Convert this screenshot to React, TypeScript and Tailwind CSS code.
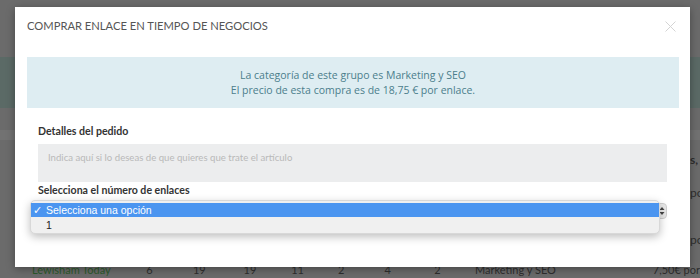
import React from 'react';

// Fondo de la página (tabla detrás del modal, oscurecida por el overlay)
function BackgroundPage() {
  return (
    <div className="flex flex-col w-[700px] h-[278px] bg-[#6b6b6b] text-[#2e2e2e] font-['Lato',sans-serif]">
      <div className="h-[57px]" />
      <div className="h-[51px] bg-[#5b6a66]" />
      <div className="h-[22px]" />
      <div className="h-[10px] bg-[#727272]" />
      <div className="h-[30px] pl-[690px] text-[12px] leading-[40px] whitespace-nowrap overflow-hidden font-bold">s,</div>
      <div className="h-[32px] pl-[690px] text-[12px] leading-[46px] whitespace-nowrap overflow-hidden">por</div>
      <div className="h-[47px] pl-[690px] text-[12px] leading-[76px] whitespace-nowrap overflow-hidden">por</div>
      <div className="flex items-start h-[29px] pt-[14px] text-[11px] leading-[14px] whitespace-nowrap">
        <span className="ml-[32px] w-[115px] text-[#2c5a2c]">Lewisham Today</span>
        <span className="w-[47px]">6</span>
        <span className="w-[51px]">19</span>
        <span className="w-[48px]">19</span>
        <span className="w-[47px]">11</span>
        <span className="w-[47px]">2</span>
        <span className="w-[50px]">4</span>
        <span className="w-[41px]">2</span>
        <span className="w-[179px]">Marketing y SEO</span>
        <span>7,50€ por</span>
      </div>
    </div>
  );
}

function CloseIcon() {
  return (
    <svg width="11" height="11" viewBox="0 0 11 11" className="block">
      <path d="M0.5 0.5 L10.5 10.5 M10.5 0.5 L0.5 10.5" stroke="#d4d4d4" strokeWidth="1" />
    </svg>
  );
}

function SelectArrows() {
  return (
    <svg width="6" height="10" viewBox="0 0 6 10" className="block">
      <path d="M0.5 4 L3 1 L5.5 4 Z" fill="#444" />
      <path d="M0.5 6 L3 9 L5.5 6 Z" fill="#444" />
    </svg>
  );
}

function BuyLinkModal() {
  return (
    <div className="absolute left-[15px] top-[7px] w-[675px] h-[260px] bg-white shadow-[0_2px_8px_rgba(0,0,0,0.35)]">
      {/* cabecera */}
      <div className="flex justify-between items-start pt-[11px] pl-[12px] pr-[14px] h-[50px]">
        <h3 className="text-[11.2px] leading-[16px] text-[#555] font-['Lato',sans-serif]">
          COMPRAR ENLACE EN TIEMPO DE NEGOCIOS
        </h3>
        <div className="mt-[3px]">
          <CloseIcon />
        </div>
      </div>

      {/* aviso */}
      <div className="mx-[12px] w-[652px] py-[10.5px] bg-[#deedf2] text-center text-[10.5px] leading-[15px] text-[#4b7e8c] font-['Open_Sans',sans-serif]">
        <p>La categoría de este grupo es Marketing y SEO</p>
        <p>El precio de esta compra es de 18,75 € por enlace.</p>
      </div>

      {/* formulario */}
      <div className="relative mt-[15px] ml-[23px] w-[629px] font-['Lato',sans-serif]">
        <label className="block text-[10.6px] leading-[16px] font-bold text-[#333]">Detalles del pedido</label>
        <div className="mt-[5px] h-[38px] bg-[#ecedee] px-[10px] pt-[8px] text-[9.6px] leading-[12px] text-[#b9b9b9]">
          Indica aquí si lo deseas de que quieres que trate el artículo
        </div>
        <label className="block text-[10.6px] leading-[16px] font-bold text-[#333]">Selecciona el número de enlaces</label>
        <div className="mt-[5px] h-[16px] rounded-[4px] bg-[#e9e9e9] border border-[#cfcfcf] flex items-center justify-end pr-[1px]">
          <SelectArrows />
        </div>

        {/* lista desplegable nativa abierta */}
        <div className="absolute left-[-8px] top-[77px] w-[630px] h-[34px] rounded-[5px] bg-[#f0f0f0] border border-[#d8d8d8] shadow-[0_3px_8px_rgba(0,0,0,0.25)] pt-[2px] font-['Liberation_Sans',sans-serif] text-[10.5px]">
          <div className="flex items-center h-[14px] bg-[#4b95f0] text-white leading-[14px]">
            <span className="w-[15px] pl-[2px] text-[11px]">✓</span>
            <span>Selecciona una opción</span>
          </div>
          <div className="flex items-center h-[14px] mt-[1px] text-[#222] leading-[14px]">
            <span className="w-[15px]" />
            <span>1</span>
          </div>
        </div>
      </div>
    </div>
  );
}

export default function App() {
  return (
    <div className="relative w-[700px] h-[278px] overflow-hidden">
      <BackgroundPage />
      <BuyLinkModal />
    </div>
  );
}
